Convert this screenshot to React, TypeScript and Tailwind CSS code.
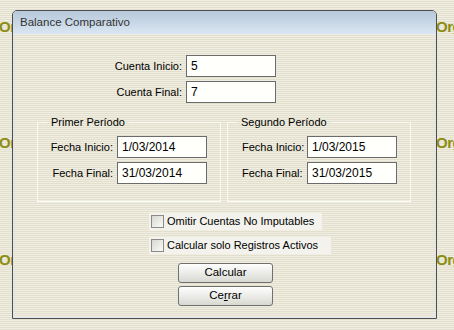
import React from 'react';

const Field = ({ label, value, labelClass }: { label: string; value: string; labelClass: string }) => (
  <div className="flex items-center h-[22px]">
    <span className={`whitespace-nowrap ${labelClass}`}>{label}</span>
    <div className="ml-[4px] w-[90px] h-[22px] border border-[#6b6b6b] bg-[#fffffb] pl-[4px] flex items-center text-[12px] text-black">
      {value}
    </div>
  </div>
);

const Check = ({ text, width }: { text: string; width: string }) => (
  <div className={`flex items-center h-[17px] ml-[135px] bg-[#f3f2ec] ${width}`}>
    <span className="shrink-0 ml-[2px] w-[13px] h-[13px] border border-[#8a8a86] bg-gradient-to-br from-[#d8d8d0] to-[#fbfbf8]" />
    <span className="ml-[3px] whitespace-nowrap text-[11px] text-black">{text}</span>
  </div>
);

const Period = ({ title, start, end, left }: { title: string; start: string; end: string; left?: boolean }) => (
  <fieldset className="w-[184px] border border-[#fbfbf6] pt-[7px] pb-[17px]">
    <legend className="ml-[9px] px-[4px] whitespace-nowrap text-[11px] leading-[13px] text-black">{title}</legend>
    <Field label="Fecha Inicio:" value={start} labelClass={left ? 'pl-[14px] w-[75px] text-left' : 'w-[75px] text-right'} />
    <div className="mt-[4px]">
      <Field label="Fecha Final:" value={end} labelClass={left ? 'pl-[14px] w-[75px] text-left' : 'w-[75px] text-right'} />
    </div>
  </fieldset>
);

const Btn = ({ children }: { children: React.ReactNode }) => (
  <button className="w-[95px] h-[20px] rounded-[3px] border border-[#707070] bg-gradient-to-b from-[#fefefe] to-[#d9d9d3] text-[11.5px] text-black flex items-center justify-center">
    {children}
  </button>
);

export default function App() {
  const marks = ['top-[16px]', 'top-[132px]', 'top-[249px]'];
  return (
    <div className="relative w-[454px] h-[330px] overflow-hidden bg-[repeating-linear-gradient(to_bottom,#f0eee2_0px,#f0eee2_1px,#e2dfcd_1px,#e2dfcd_2px)] font-['Liberation_Sans',Arial,sans-serif]">
      {/* watermark behind the dialog */}
      {marks.map((y, i) => (
        <span key={'l' + i} className={`absolute left-[-1px] ${y} text-[15px] font-bold tracking-[-0.5px] text-[#8d8d14]`}>Or</span>
      ))}
      {marks.map((y, i) => (
        <span key={'r' + i} className={`absolute left-[436px] ${y} w-[18px] overflow-hidden whitespace-nowrap text-[15px] font-bold tracking-[-0.5px] text-[#8d8d14]`}>Org</span>
      ))}

      <div className="relative pt-[10px] pl-[12px]">
        <div className="w-[425px] h-[309px] border border-[#4f4f4f] rounded-t-[5px] overflow-hidden flex flex-col">
          <div className="h-[23px] shrink-0 bg-gradient-to-b from-[#b6c8da] to-[#dae6f2] flex items-center pl-[7px] text-[11.5px] text-[#333]">
            Balance Comparativo
          </div>
          <div className="flex-1 border-l border-r border-b border-[#dfe5ee] bg-[repeating-linear-gradient(to_bottom,#f0eee2_0px,#f0eee2_1px,#e2dfcd_1px,#e2dfcd_2px)] pt-[21px] text-[11px] text-black">
            <div className="flex items-center h-[22px]">
              <span className="w-[168px] text-right">Cuenta Inicio:</span>
              <div className="ml-[4px] w-[90px] h-[22px] border border-[#6b6b6b] bg-[#fffffb] pl-[4px] flex items-center text-[12px]">5</div>
            </div>
            <div className="flex items-center h-[22px] mt-[4px]">
              <span className="w-[168px] text-right">Cuenta Final:</span>
              <div className="ml-[4px] w-[90px] h-[22px] border border-[#6b6b6b] bg-[#fffffb] pl-[4px] flex items-center text-[12px]">7</div>
            </div>

            <div className="flex mt-[13px] ml-[23px] gap-[6px]">
              <Period title="Primer Período" start="1/03/2014" end="31/03/2014" />
              <Period title="Segundo Período" start="1/03/2015" end="31/03/2015" left />
            </div>

            <div className="mt-[11px]">
              <Check text="Omitir Cuentas No Imputables" width="w-[173px]" />
            </div>
            <div className="mt-[7px]">
              <Check text="Calcular solo Registros Activos" width="w-[182px]" />
            </div>

            <div className="mt-[9px] ml-[164px] flex flex-col gap-[3px]">
              <Btn>Calcular</Btn>
              <Btn>
                <span>Ce<span className="underline">r</span>rar</span>
              </Btn>
            </div>
          </div>
        </div>
      </div>
    </div>
  );
}
